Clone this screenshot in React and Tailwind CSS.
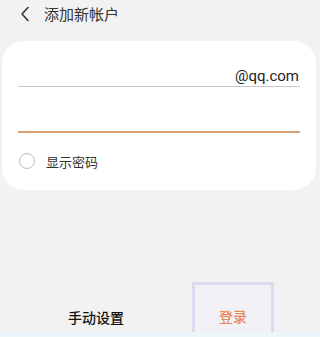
import React from "react";

const font = { fontFamily: '"Noto Sans CJK SC", "Noto Sans", sans-serif' };

export default function App() {
  return (
    <div className="w-[320px] h-[337px] bg-[#f2f2f2] flex flex-col overflow-hidden" style={font}>
      {/* header */}
      <div className="h-[30px] flex items-center pl-[20px] shrink-0">
        <svg width="10" height="16" viewBox="0 0 10 16" className="mt-[-2px]">
          <path d="M8 1.5 L2 8 L8 14.5" fill="none" stroke="#333" strokeWidth="1.6" strokeLinecap="round" strokeLinejoin="round" />
        </svg>
        <span className="ml-[14px] text-[15px] text-[#333] leading-none mt-[-3px]">添加新帐户</span>
      </div>

      {/* card */}
      <div className="mt-[11px] ml-[2px] w-[314px] h-[149px] bg-white rounded-[22px] px-[16px] pt-[27px] flex flex-col shrink-0">
        <div className="h-[16px] flex justify-end items-end border-b border-[#c8c8c8] pb-[2px] box-content">
          <span className="text-[15px] leading-none text-[#222] mr-[1px]" style={{ fontFamily: '"Roboto", "Noto Sans", sans-serif' }}>@qq.com</span>
        </div>
        <div className="mt-[44px] h-[2px] bg-[#d9a277]" />
        <div className="mt-[20px] flex items-center">
          <div className="w-[16px] h-[16px] rounded-full border-[1.5px] border-[#bdbdbd] ml-[1px]" />
          <span className="ml-[11px] text-[13px] text-[#333] leading-none">显示密码</span>
        </div>
      </div>

      <div className="flex-1" />

      {/* bottom actions */}
      <div className="h-[55px] flex items-end shrink-0 relative">
        <div className="w-[192px] h-[50px] flex items-center justify-center">
          <span className="text-[14px] font-medium text-[#111] mt-[10px]">手动设置</span>
        </div>
        <div className="w-[82px] h-[55px] border-[3px] border-b-0 border-[#dcdaef] bg-[#f1f0f5] flex items-center justify-center">
          <span className="text-[14px] font-medium text-[#e8895a] mt-[10px]">登录</span>
        </div>
        <div className="absolute left-0 right-0 bottom-0 h-[5px] bg-[#eef5f8]" />
      </div>
    </div>
  );
}
